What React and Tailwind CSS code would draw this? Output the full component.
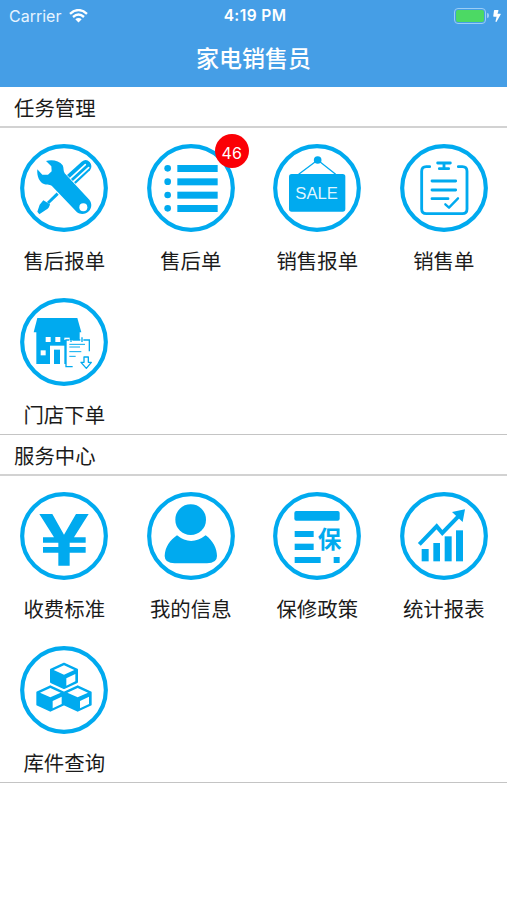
import { FaBolt } from 'react-icons/fa';

function RepairIcon() {
	return (
		<>
			<path d="M141 93 185 53Q198 43 209 54 219 66 210 79L167 119Z" />
			<path
				d="M151 103 196 62M161 112 206 71"
				stroke="#fff"
				strokeWidth="5"
				strokeLinecap="round"
			/>
			<path d="M113 149 84 177" stroke="#00aaef" strokeWidth="9" />
			<path d="M70 169 90 181Q88 193 77 198L58 211 52 203 59 182Z" />
			<path d="M78 51C96 46 118 50 128 64 132 72 129 80 134 88L208 167C217 178 215 192 207 201 198 211 182 213 171 205L98 128C90 120 82 124 74 121 58 116 50 96 52 76L67 92 84 92 95 82 94 67Z" />
			<circle cx="190" cy="190" r="12" fill="#fff" />
		</>
	);
}

function ListIcon() {
	return [63, 103, 143, 183].map((y) => (
		<g key={y}>
			<circle cx="62" cy={y + 10} r="10" />
			<rect x="91" y={y} width="121" height="21" />
		</g>
	));
}

function SaleIcon() {
	return (
		<>
			<path
				d="M77 91 134 48 188 91"
				fill="none"
				stroke="#00aaef"
				strokeWidth="4"
			/>
			<circle cx="134" cy="48" r="11.5" />
			<rect x="48" y="90" width="169" height="113" rx="8" />
			<text
				x="67"
				y="166"
				fill="#dff5ff"
				fontSize="52"
				textLength="128"
				lengthAdjust="spacingAndGlyphs"
				className="font-['Liberation_Sans',sans-serif]"
			>
				SALE
			</text>
		</>
	);
}

function ClipboardIcon() {
	return (
		<g
			fill="none"
			stroke="#00aaef"
			strokeWidth="8.5"
			strokeLinecap="round"
			strokeLinejoin="round"
		>
			<path d="M89 68H79Q65 68 65 82V195Q65 209 79 209H187Q201 209 201 195V82Q201 68 187 68H175" />
			<path d="M113 57H151M132 58V72M118 74H146" />
			<path d="M96 111H167M96 138H167M96 164H144" />
			<path d="M136 181 147 191 174 163" strokeWidth="7" />
		</g>
	);
}

function StoreIcon() {
	return (
		<>
			<path d="M52 60H172L184 103H41Z" />
			<path d="M49 102H179V126H138V198H49Z" />
			<g fill="#fff">
				<rect x="77" y="117" width="15" height="15" />
				<rect x="106" y="117" width="15" height="15" />
				<rect x="62" y="157" width="15" height="15" />
				<rect x="90" y="143" width="43" height="56" />
				<rect x="138" y="126" width="74" height="80" />
			</g>
			<rect x="102" y="155" width="18" height="43" />
			<path d="M133 119H149V126H133Z" fill="#fff" />
			<g fill="none" stroke="#00aaef" strokeWidth="4">
				<path d="M158 206H138V126H148M157 126H181M190 126H208V160" />
				<path d="M153 118V132M186 118V132" />
				<path d="M148 139H195M148 147H180M148 161H184M148 175H167" strokeWidth="3" />
				<path d="M192 177H205V193H214L199 211 183 193H192Z" strokeLinejoin="round" />
			</g>
		</>
	);
}

function YenIcon() {
	return (
		<path d="M58 66H97L132 128 168 66H206L162 136H197V152H149V165H197V182H149V221H115V182H69V165H115V152H69V136H102Z" />
	);
}

function UserIcon() {
	return (
		<>
			<circle cx="131" cy="83" r="46" />
			<path d="M90 130Q132 164 176 130C198 146 210 170 210 192Q210 214 180 214H83Q53 214 53 192C54 165 69 145 90 130Z" />
		</>
	);
}

function PolicyIcon() {
	return (
		<>
			<rect x="64" y="57" width="136" height="29" rx="6" />
			<rect x="65" y="117" width="57" height="18" />
			<rect x="65" y="155" width="57" height="19" />
			<rect x="65" y="195" width="78" height="18" />
			<rect x="182" y="195" width="18" height="18" />
			<text
				x="134"
				y="168"
				fontSize="71"
				fontWeight="700"
				className="font-['Noto_Sans_CJK_SC',sans-serif]"
			>
				保
			</text>
		</>
	);
}

function ChartIcon() {
	return (
		<>
			<rect x="65" y="171" width="21" height="37" />
			<rect x="100" y="153" width="20" height="55" />
			<rect x="134" y="133" width="21" height="75" />
			<rect x="168" y="115" width="21" height="93" />
			<path
				d="M58 157 110 103 127 123 178 70"
				fill="none"
				stroke="#00aaef"
				strokeWidth="12"
			/>
			<path d="M195 52 188 90 156 60Z" />
		</>
	);
}

function Cube({ x, y }) {
	return (
		<g transform={`translate(${x} ${y})`}>
			<path
				d="M0-36 39-18V19L0 37-39 19V-18Z"
				stroke="#00aaef"
				strokeWidth="6"
				strokeLinejoin="round"
			/>
			<path
				d="M0-31 31-17 0-3-31-17ZM7 8 34-5V17L7 30Z"
				fill="#fff"
			/>
		</g>
	);
}

function PartsIcon() {
	return (
		<>
			<Cube x={132} y={89} />
			<Cube x={91} y={157} />
			<Cube x={173} y={157} />
		</>
	);
}

const sections = [
	{
		title: '任务管理',
		items: [
			{ label: '售后报单', icon: RepairIcon },
			{ label: '售后单', icon: ListIcon, badge: 46 },
			{ label: '销售报单', icon: SaleIcon },
			{ label: '销售单', icon: ClipboardIcon },
			{ label: '门店下单', icon: StoreIcon },
		],
	},
	{
		title: '服务中心',
		items: [
			{ label: '收费标准', icon: YenIcon },
			{ label: '我的信息', icon: UserIcon },
			{ label: '保修政策', icon: PolicyIcon },
			{ label: '统计报表', icon: ChartIcon },
			{ label: '库件查询', icon: PartsIcon },
		],
	},
];

function MenuItem({ label, icon: Icon, badge }) {
	return (
		<button className="flex flex-col items-center pt-4">
			<span className="relative">
				<svg viewBox="0 0 264 264" fill="#00aaef" className="size-[88px]">
					<circle
						cx="132"
						cy="132"
						r="125.5"
						fill="none"
						stroke="#00aaef"
						strokeWidth="12.5"
					/>
					<Icon />
				</svg>
				{badge && (
					<span className="absolute -top-[10px] left-[68px] flex size-[34px] items-center justify-center rounded-full bg-[#fb0006] pt-[3px] font-['Inter',sans-serif] text-[16px] text-white">
						{badge}
					</span>
				)}
			</span>
			<span className="mt-[13px] text-[20.4px] leading-[30px] whitespace-nowrap">
				{label}
			</span>
		</button>
	);
}

function StatusBar() {
	return (
		<div className="grid h-[30px] grid-cols-3 items-center pr-[6px] pl-[9px] font-['Inter',sans-serif] text-[15.5px] leading-[30px]">
			<div className="flex items-center gap-[8px] text-[#e6f4ff]">
				<span className="text-[16px]">Carrier</span>
				<svg viewBox="0 0 19 14" className="h-[14px] w-[19px]" fill="none">
					<path
						d="M1 4.8Q9.500-2.600 18 4.800M4 8Q9.500 3.200 15 8"
						stroke="#fff"
						strokeWidth="2.4"
					/>
					<path d="M6.300 10.300Q9.500 7.700 12.700 10.300L9.500 13.600Z" fill="#fff" />
				</svg>
			</div>
			<div className="pt-px text-center font-semibold tracking-[0.4px]">4:19 PM</div>
			<div className="flex items-center justify-end">
				<div className="h-4 w-8 rounded-[4px] border border-[#9bcdf5] p-px">
					<div className="h-full rounded-[2px] bg-[#4cd964]" />
				</div>
				<div className="ml-px h-[5px] w-[2px] rounded-r-full bg-[#9bcdf5]" />
				<FaBolt className="ml-1 h-3 w-[8px]" />
			</div>
		</div>
	);
}

export default function App() {
	return (
		<main className="min-h-screen bg-white font-['Noto_Sans_CJK_SC',sans-serif] text-[#1b1b1b]">
			<header className="h-[87px] bg-[#459ee6] text-white">
				<StatusBar />
				<h1 className="text-center text-[23px] leading-[54px] font-medium">
					家电销售员
				</h1>
			</header>
			{sections.map((section) => (
				<section key={section.title}>
					<h2 className="h-[41px] border-b-2 border-[#d2d2d2] pl-[14px] text-[20.4px] leading-[41px]">
						{section.title}
					</h2>
					<div className="grid auto-rows-[152px] grid-cols-4 gap-y-[2px] border-b border-[#c4c4c4] pl-px">
						{section.items.map((item) => (
							<MenuItem key={item.label} {...item} />
						))}
					</div>
				</section>
			))}
		</main>
	);
}
